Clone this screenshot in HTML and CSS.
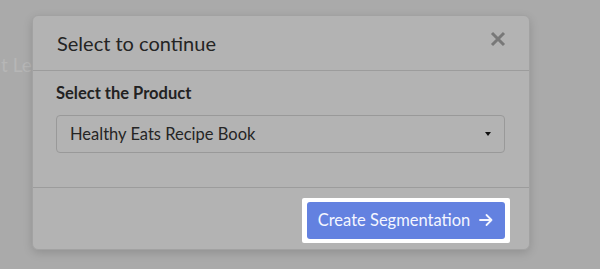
FILE: index.html
```html
<!DOCTYPE html>
<html lang="en">
<head>
    <meta charset="UTF-8">
    <title>Select to continue</title>
    <link rel="stylesheet" href="styles.css">
</head>
<body>
    <div class="page">
        <div class="page-title">t Leads</div>
    </div>
    <div class="overlay">
        <div class="modal">
            <div class="modal-header">
                <h2>Select to continue</h2>
                <svg class="close" width="16" height="16" viewBox="0 0 16 16"><path d="M2 2l12 12M14 2L2 14" stroke="#787878" stroke-width="3"/></svg>
            </div>
            <div class="modal-body">
                <label for="product">Select the Product</label>
                <div class="select" id="product">
                    <span>Healthy Eats Recipe Book</span>
                    <span class="caret"></span>
                </div>
            </div>
            <div class="modal-footer">
                <div class="spotlight">
                    <button class="button">Create Segmentation
                        <svg width="16" height="16" viewBox="0 0 16 16"><path d="M2 8h11.5M8.5 3l5 5-5 5" fill="none" stroke="#f4f6ff" stroke-width="1.8" stroke-linecap="round" stroke-linejoin="round"/></svg>
                    </button>
                </div>
            </div>
        </div>
    </div>
</body>
</html>
```
FILE: styles.css
```css
body {
    margin: 0;
    font-family: Lato, "Open Sans", Arial, sans-serif;
    background-color: #aaaaaa;
    width: 600px;
    height: 269px;
    overflow: hidden;
}
.page {
    padding: 53px 0 0 1px;
}
.page-title {
    font-size: 19px;
    color: #b6b6b6;
}
.overlay {
    position: absolute;
    top: 0;
    left: 0;
    right: 0;
    bottom: 0;
}
.modal {
    position: absolute;
    left: 32px;
    top: 15px;
    width: 496px;
    height: 233px;
    background: #b3b3b3;
    border: 1px solid #a2a2a2;
    border-radius: 6px;
    box-shadow: 0 3px 10px rgba(0,0,0,0.15);
    display: flex;
    flex-direction: column;
}
.modal-header {
    height: 54px;
    border-bottom: 1px solid #9c9c9c;
    display: flex;
    align-items: center;
    justify-content: space-between;
    padding: 0 23px 0 24px;
}
.modal-header h2 {
    margin: 0;
    font-size: 20px;
    font-weight: 400;
    color: #242424;
}
.close {
    margin-top: -9px;
}
.modal-body {
    height: 117px;
    border-bottom: 1px solid #9c9c9c;
    padding: 12px 24px 0 23px;
    box-sizing: border-box;
}
label {
    display: block;
    font-size: 16.5px;
    font-weight: 700;
    color: #222;
    margin-bottom: 12px;
}
.select {
    height: 36px;
    border: 1px solid #999;
    border-radius: 4px;
    display: flex;
    align-items: center;
    justify-content: space-between;
    padding: 0 13px 0 13px;
    font-size: 16.5px;
    color: #252525;
}
.caret {
    width: 0;
    height: 0;
    border-left: 3px solid transparent;
    border-right: 3px solid transparent;
    border-top: 4px solid #111;
}
.modal-footer {
    flex: 1;
    display: flex;
    justify-content: flex-end;
    align-items: center;
    padding: 3px 19px 0 0;
}
.spotlight {
    background: #fff;
    padding: 4px 5px;
    border-radius: 2px;
}
.button {
    display: flex;
    align-items: center;
    gap: 8px;
    height: 37px;
    width: 198px;
    justify-content: center;
    white-space: nowrap;
    background: #6381e0;
    color: #f4f6ff;
    border: none;
    border-radius: 3px;
    font-family: Lato, "Open Sans", Arial, sans-serif;
    font-size: 16.5px;
    padding: 0;
}
```
